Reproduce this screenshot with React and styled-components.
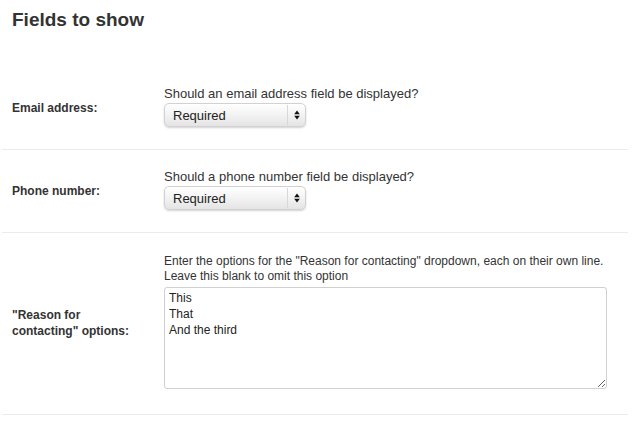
import React from "react";
import styled, { createGlobalStyle } from "styled-components";

const Global = createGlobalStyle`
  html, body { margin: 0; padding: 0; background: #fff; }
  body {
    font-family: "Liberation Sans", Arial, Helvetica, sans-serif;
    color: #333;
    width: 639px;
  }
`;

const Page = styled.div`
  padding: 0 11px 0 2px;
`;

const Title = styled.h2`
  margin: 0;
  padding: 9px 0 0 10px;
  font-size: 19px;
  line-height: 22px;
  font-weight: bold;
  color: #333;
  height: 55px;
  box-sizing: content-box;
`;

const Row = styled.div`
  display: grid;
  grid-template-columns: 162px 1fr;
  align-items: center;
  padding: ${(p) => p.$pt}px 0 ${(p) => p.$pb}px;
  border-bottom: 1px solid #ebebeb;
`;

const Label = styled.div`
  padding-left: 10px;
  width: 125px;
  font-size: 12px;
  line-height: 16px;
  font-weight: bold;
  color: #333;
  margin-top: 2px;
`;

const Field = styled.div`
  display: flex;
  flex-direction: column;
  align-items: flex-start;
`;

const Help = styled.div`
  font-size: ${(p) => p.$fs || 13}px;
  line-height: 15px;
  color: #333;
  white-space: nowrap;
  margin-bottom: ${(p) => p.$mb || 2}px;
`;

const SelectWrap = styled.div`
  position: relative;
  width: 142px;
  height: 24px;
`;

const Select = styled.select`
  appearance: none;
  -webkit-appearance: none;
  width: 142px;
  height: 24px;
  margin: 0;
  padding: 0 20px 0 8px;
  font-family: "Liberation Sans", Arial, Helvetica, sans-serif;
  font-size: 13px;
  color: #222;
  border: 1px solid #d2d2d2;
  border-radius: 5px;
  background: linear-gradient(to bottom, #ffffff 0%, #f4f4f4 45%, #e4e4e4 100%);
  box-shadow: 0 1px 2px rgba(0, 0, 0, 0.18), inset 0 1px 0 #fff;
  outline: none;
`;

const Arrows = styled.span`
  position: absolute;
  top: 2px;
  bottom: 2px;
  right: 0;
  width: 18px;
  border-left: 1px solid #d8d8d8;
  display: flex;
  align-items: center;
  justify-content: center;
  pointer-events: none;
`;

const TextArea = styled.textarea`
  width: 443px;
  height: 102px;
  box-sizing: border-box;
  margin: 0;
  padding: 2px 4px;
  font-family: "Liberation Sans", Arial, Helvetica, sans-serif;
  font-size: 12px;
  line-height: 16px;
  color: #222;
  border: 1px solid #d0d0d0;
  border-radius: 3px;
  outline: none;
  resize: both;
`;

function Dropdown() {
  return (
    <SelectWrap>
      <Select defaultValue="required">
        <option value="required">Required</option>
        <option value="optional">Optional</option>
        <option value="hidden">Hidden</option>
      </Select>
      <Arrows>
        <svg width="6" height="10" viewBox="0 0 6 10">
          <path d="M3 0.5 L5.8 4.2 L0.2 4.2 Z" fill="#111" />
          <path d="M3 9.5 L5.8 5.8 L0.2 5.8 Z" fill="#111" />
        </svg>
      </Arrows>
    </SelectWrap>
  );
}

export default function App() {
  return (
    <Page>
      <Global />
      <Title>Fields to show</Title>
      <Row $pt={22} $pb={22}>
        <Label>Email address:</Label>
        <Field>
          <Help>Should an email address field be displayed?</Help>
          <Dropdown />
        </Field>
      </Row>
      <Row $pt={19} $pb={22}>
        <Label>Phone number:</Label>
        <Field>
          <Help>Should a phone number field be displayed?</Help>
          <Dropdown />
        </Field>
      </Row>
      <Row $pt={21} $pb={25}>
        <Label>"Reason for contacting" options:</Label>
        <Field>
          <Help $fs={12} $mb={3}>
            Enter the options for the "Reason for contacting" dropdown, each on their own line.
            <br />
            Leave this blank to omit this option
          </Help>
          <TextArea defaultValue={"This\nThat\nAnd the third"} />
        </Field>
      </Row>
    </Page>
  );
}
